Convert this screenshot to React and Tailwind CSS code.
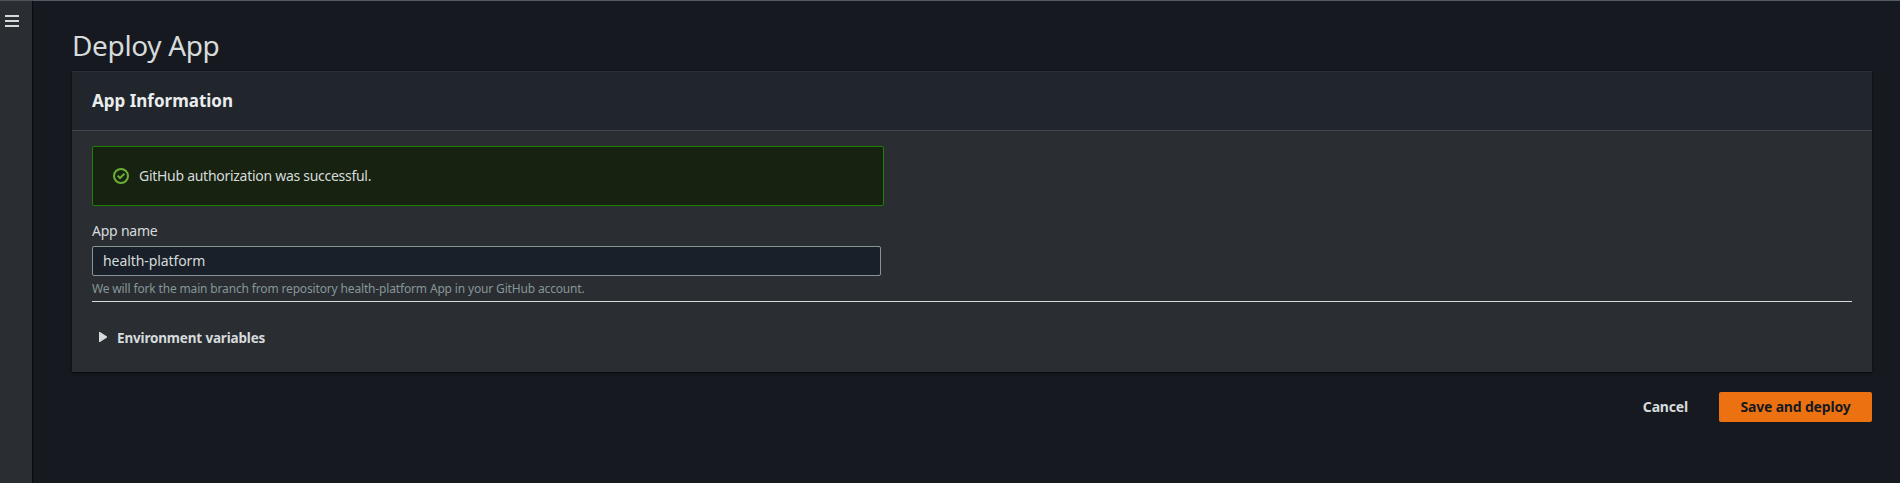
function MenuIcon() {
  return (
    <svg className="block h-3 w-3.5" viewBox="0 0 14 12" fill="#d5dbdb" shapeRendering="crispEdges">
      <rect width="14" height="2" />
      <rect y="5" width="14" height="2" />
      <rect y="10" width="14" height="2" />
    </svg>
  );
}

function SuccessIcon() {
  return (
    <svg className="block size-4 shrink-0" viewBox="0 0 16 16" fill="none" stroke="#6aaf35" strokeWidth="2">
      <circle cx="8" cy="8" r="7" />
      <path d="M4.6 7.6 7 10 11.4 5.8" />
    </svg>
  );
}

export default function App() {
  return (
    <div className="flex h-[483px] flex-col bg-[#16191f] font-['Noto_Sans',sans-serif] text-sm text-[#d5dbdb]">
      <div className="h-px shrink-0 bg-[#545b64]" />
      <div className="flex min-h-0 flex-1">
        <aside className="w-8 shrink-0 bg-[#2a2e33] pt-3.5 pl-[5px] shadow-[1px_0_1px_0_rgba(0,0,0,0.5)]">
          <button type="button" aria-label="Open navigation" className="block">
            <MenuIcon />
          </button>
        </aside>
        <main className="min-w-0 flex-1 pt-[26px] pr-7 pl-10">
          <h1 className="h-[44px] text-[28px] leading-9 tracking-[-0.35px] whitespace-nowrap">Deploy App</h1>
          <section className="h-[301px] border-t border-[#2b2f35] bg-[#2a2e33] shadow-[0_1px_2px_0_rgba(0,0,0,0.7)]">
            <header className="flex h-[59px] items-center border-b border-[#414750] bg-[#21252c] px-5">
              <h2 className="text-[17px] leading-[22px] font-bold whitespace-nowrap text-[#eaeded]">App Information</h2>
            </header>
            <div className="px-5 pt-[15px]">
              <div className="flex h-[60px] w-[792px] items-center gap-2.5 rounded-[2px] border border-[#1d8102] bg-[#172211] pl-5">
                <SuccessIcon />
                <span className="tracking-[-0.28px] whitespace-nowrap">GitHub authorization was successful.</span>
              </div>
              <label htmlFor="name" className="mt-[14px] block h-[26px] leading-[22px] tracking-[-0.22px]">App name</label>
              <input
                id="name"
                defaultValue="health-platform"
                className="block h-[30px] w-[789px] rounded-[2px] border border-[#879596] bg-[#1a2029] px-2.5 pb-0.5 tracking-[-0.08px] outline-none"
              />
              <p className="mt-1 h-[21px] text-xs leading-[18px] tracking-[-0.155px] whitespace-nowrap text-[#879596]">
                We will fork the main branch from repository health-platform App in your GitHub account.
              </p>
              <hr className="border-t border-[#d5dbdb]" />
              <button type="button" className="mt-[24px] flex h-[22px] items-center gap-2.5 pl-[7px] text-[13.5px] font-bold whitespace-nowrap">
                <svg className="block h-2.5 w-2" viewBox="0 0 8 10" fill="#d5dbdb">
                  <path d="M0 0H1L8 4.4V5.6L1 10H0Z" />
                </svg>
                <span className="pt-0.5 leading-5 tracking-[-0.17px]">Environment variables</span>
              </button>
            </div>
          </section>
          <div className="mt-5 flex h-[30px] justify-end gap-[31px] font-bold tracking-[-0.18px]">
            <button type="button" className="whitespace-nowrap">Cancel</button>
            <button type="button" className="w-[153px] rounded-[2px] bg-[#ec7211] whitespace-nowrap text-[#16191f]">
              Save and deploy
            </button>
          </div>
        </main>
      </div>
    </div>
  );
}
